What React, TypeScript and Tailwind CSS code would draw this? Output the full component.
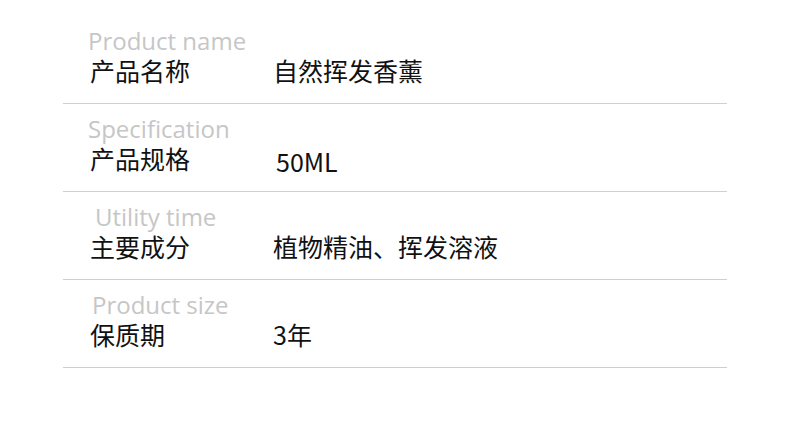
import React from 'react';

interface SpecRow {
  en: string;
  zh: string;
  value: string;
  enPad: string;
  valuePad: string;
  line: string;
}

const rows: SpecRow[] = [
  { en: 'Product name', zh: '产品名称', value: '自然挥发香薰', enPad: 'pl-[25px]', valuePad: 'pl-0 pt-0', line: 'bg-[#e6cbad]' },
  { en: 'Specification', zh: '产品规格', value: '50ML', enPad: 'pl-[25px]', valuePad: 'pl-[3px] pt-[3px]', line: 'bg-[#ddcdbf]' },
  { en: 'Utility time', zh: '主要成分', value: '植物精油、挥发溶液', enPad: 'pl-[32px]', valuePad: 'pl-0 pt-0', line: 'bg-[#e8caa8]' },
  { en: 'Product size', zh: '保质期', value: '3年', enPad: 'pl-[29px]', valuePad: 'pl-0 pt-0', line: 'bg-[#e2c9b3]' },
];

export default function App() {
  return (
    <div className="w-[790px] h-[435px] bg-white pt-[16px]">
      <div className="ml-[63px] w-[664px]">
        {rows.map((r) => (
          <div key={r.en} className="h-[88px] flex flex-col">
            <div className="flex-1 pt-[11px]">
              <div
                className={`${r.enPad} text-[24px] leading-[28px] text-[#c6c6c6]`}
                style={{ fontFamily: '"Open Sans", "Noto Sans", sans-serif' }}
              >
                {r.en}
              </div>
              <div
                className="flex mt-[1px] text-[25px] leading-[28px] text-[#111111]"
                style={{ fontFamily: '"Noto Sans CJK SC", "Noto Sans", sans-serif' }}
              >
                <div className="w-[210px] pl-[27px]">{r.zh}</div>
                <div className={r.valuePad}>{r.value}</div>
              </div>
            </div>
            <div className={`h-px ${r.line}`} />
          </div>
        ))}
      </div>
    </div>
  );
}
